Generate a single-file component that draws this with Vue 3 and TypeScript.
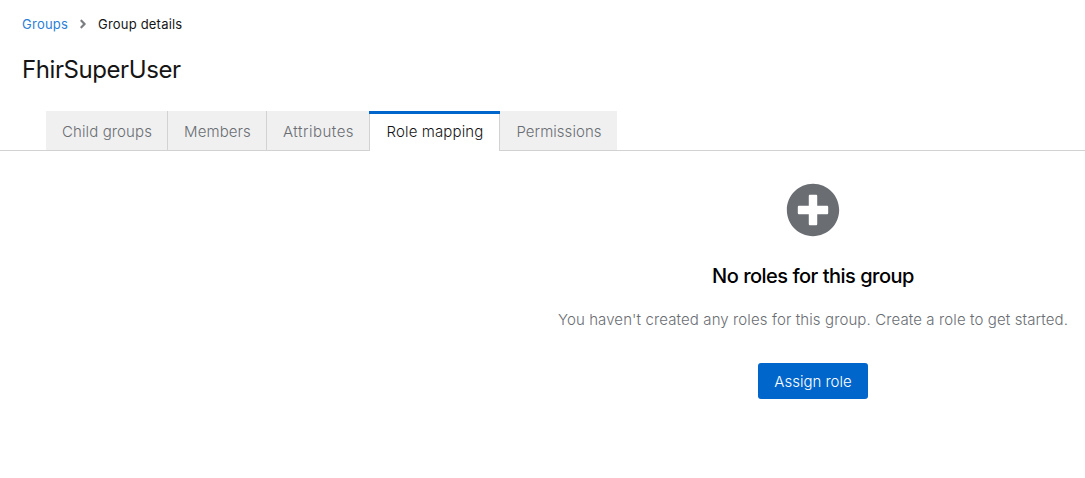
<script setup lang="ts">
interface Tab {
  id: string
  label: string
}

const tabs: Tab[] = [
  { id: 'children', label: 'Child groups' },
  { id: 'members', label: 'Members' },
  { id: 'attributes', label: 'Attributes' },
  { id: 'roles', label: 'Role mapping' },
  { id: 'permissions', label: 'Permissions' },
]
const activeTab = 'roles'
</script>

<template>
  <main class="page">
    <nav class="breadcrumb" aria-label="Breadcrumb">
      <a class="crumb-link">Groups</a>
      <svg class="chevron" viewBox="0 0 256 512" aria-hidden="true">
        <path d="M224.3 273l-136 136c-9.4 9.4-24.6 9.4-33.9 0l-22.6-22.6c-9.4-9.4-9.4-24.6 0-33.9l96.4-96.4-96.4-96.4c-9.4-9.4-9.4-24.6 0-33.9L54.3 103c9.4-9.4 24.6-9.4 33.9 0l136 136c9.5 9.4 9.5 24.6.1 34z" />
      </svg>
      <span class="crumb-current">Group details</span>
    </nav>
    <h1 class="title">FhirSuperUser</h1>
    <div class="tabs" role="tablist">
      <button
        v-for="tab in tabs"
        :key="tab.id"
        class="tab"
        :class="[tab.id, { active: tab.id === activeTab }]"
        role="tab"
      >
        <span class="tab-label">{{ tab.label }}</span>
      </button>
    </div>
    <section class="empty">
      <svg class="plus" viewBox="0 0 512 512" aria-hidden="true">
        <path d="M256 8C119 8 8 119 8 256s111 248 248 248 248-111 248-248S393 8 256 8zm144 276c0 6.600-5.400 12-12 12h-92v92c0 6.600-5.400 12-12 12h-56c-6.600 0-12-5.400-12-12v-92h-92c-6.600 0-12-5.400-12-12v-56c0-6.600 5.400-12 12-12h92v-92c0-6.600 5.400-12 12-12h56c6.600 0 12 5.400 12 12v92h92c6.600 0 12 5.400 12 12v56z" />
      </svg>
      <h2 class="empty-title">No roles for this group</h2>
      <p class="empty-text">You haven't created any roles for this group. Create a role to get started.</p>
      <button class="assign">Assign role</button>
    </section>
  </main>
</template>

<style>
body {
  background: #fff;
}
</style>

<style scoped>
.page {
  box-sizing: border-box;
  width: 1085px;
  height: 478px;
  overflow: hidden;
  font-family: Inter, "Liberation Sans", sans-serif;
  color: #151515;
}
.breadcrumb {
  display: flex;
  align-items: center;
  height: 20px;
  padding: 14px 0 0 22px;
  font-size: 13px;
  line-height: 20px;
  white-space: nowrap;
}
.crumb-link {
  width: 46px;
  color: #2b7fd8;
  letter-spacing: 0.25px;
}
.chevron {
  width: 8px;
  height: 14px;
  margin: 0 11px;
  fill: #7b7d80;
}
.crumb-current {
  letter-spacing: 0.2px;
}
.title {
  margin: 20px 0 0 22px;
  font-size: 24px;
  line-height: 31px;
  font-weight: 400;
  letter-spacing: -0.42px;
}
.tabs {
  display: flex;
  height: 40px;
  margin-top: 26px;
  padding-left: 46px;
  box-shadow: inset 0 -1px #d2d2d2;
}
.tab {
  box-sizing: border-box;
  height: 39px;
  margin: 0;
  padding: 3px 0 0 1px;
  border: 0;
  border-right: 1px solid #d2d2d2;
  background: #f0f0f0;
  color: #6a6e73;
  font: 300 15px/36px Inter, "Liberation Sans", sans-serif;
  letter-spacing: 0.12px;
  white-space: nowrap;
}
.children { width: 122px; }
.members { width: 99px; }
.attributes { width: 103px; letter-spacing: 0.5px; }
.permissions { width: 117px; border-right: 0; letter-spacing: 0.05px; }
.tab.active {
  width: 131px;
  height: 40px;
  margin-left: -1px;
  padding: 0 0 1px 1px;
  border-top: 0;
  border-left: 1px solid #d2d2d2;
  background: #fff;
  color: #151515;
  position: relative;
}
.tab.active::before {
  content: "";
  position: absolute;
  top: 0;
  right: -1px;
  left: -1px;
  height: 3px;
  background: #06c;
}
.tab.active .tab-label {
  display: block;
  padding-top: 3px;
}
.empty {
  display: flex;
  flex-direction: column;
  align-items: center;
  width: 520px;
  margin-left: 553px;
  padding-top: 32px;
}
.plus {
  width: 54px;
  height: 54px;
  fill: #6a6e73;
}
.empty-title {
  margin: 24px 0 0;
  font-size: 20px;
  line-height: 30px;
  font-weight: 500;
  letter-spacing: -0.5px;
  color: #000;
  white-space: nowrap;
}
.empty-text {
  margin: 17px 0 0;
  font-size: 15px;
  line-height: 24px;
  font-weight: 300;
  letter-spacing: 0.11px;
  color: #6a6e73;
  white-space: nowrap;
}
.assign {
  width: 110px;
  height: 36px;
  margin-top: 31px;
  padding: 1px 0 0;
  border: 0;
  border-radius: 3px;
  background: #06c;
  color: #fff;
  font: 300 15px/35px Inter, "Liberation Sans", sans-serif;
}
</style>
